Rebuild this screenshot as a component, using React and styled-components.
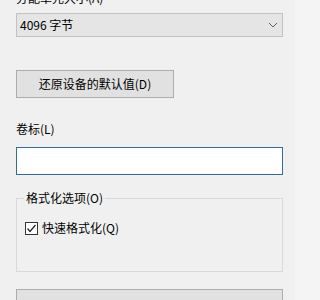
import React from "react";
import styled, { createGlobalStyle } from "styled-components";

const Global = createGlobalStyle`
  html, body { margin: 0; padding: 0; background: #f4f4f4; }
  body { width: 300px; height: 300px; overflow: hidden; }
  * { box-sizing: border-box; }
`;

const Panel = styled.div`
  width: 295px;
  height: 300px;
  background: #f0f0f0;
  padding: 0 12px 0 16px;
  font-family: "Noto Sans CJK SC", "Microsoft YaHei", sans-serif;
  font-size: 12px;
  color: #000;
  display: flex;
  flex-direction: column;
  overflow: hidden;
  & > * { flex-shrink: 0; }
`;

const Label = styled.div`
  height: 16px;
  line-height: 16px;
  margin-top: ${(p) => p.$top || 0}px;
  white-space: nowrap;
`;

const Combo = styled.div`
  margin-top: 7px;
  height: 24px;
  width: 267px;
  background: #e5e5e5;
  border: 1px solid #c2c2c2;
  display: flex;
  align-items: center;
  justify-content: space-between;
  padding: 0 4px 0 3px;
  line-height: 16px;
`;

const Button = styled.div`
  margin-top: ${(p) => p.$top}px;
  width: ${(p) => p.$width}px;
  height: ${(p) => p.$height}px;
  background: #e1e1e1;
  border: 1px solid #adadad;
  display: flex;
  align-items: center;
  justify-content: center;
  line-height: 16px;
`;

const TextBox = styled.div`
  margin-top: 10px;
  width: 267px;
  height: 28px;
  background: #fff;
  border: 1px solid #2f6f9a;
`;

const Group = styled.fieldset`
  margin: 15px 0 0 0;
  width: 267px;
  border: 1px solid #d9d9d9;
  padding: 0 7px 35px 7px;
  min-width: 0;
`;

const Legend = styled.legend`
  padding: 0 2px;
  line-height: 16px;
  height: 16px;
`;

const CheckRow = styled.div`
  margin-top: 14px;
  display: flex;
  align-items: center;
  gap: 4px;
  height: 16px;
  line-height: 16px;
  padding-left: 1px;
`;

const Box = styled.span`
  width: 13px;
  height: 13px;
  border: 1px solid #333;
  background: #fff;
  display: flex;
  align-items: center;
  justify-content: center;
`;

export default function App() {
  return (
    <>
      <Global />
      <Panel>
        <Label $top={-10}>分配单元大小(A)</Label>
        <Combo>
          <span>4096 字节</span>
          <svg width="10" height="6" viewBox="0 0 10 6">
            <polyline points="1,1 5,5 9,1" fill="none" stroke="#606060" strokeWidth="1" />
          </svg>
        </Combo>
        <Button $top={33} $width={158} $height={28}>还原设备的默认值(D)</Button>
        <Label $top={23}>卷标(L)</Label>
        <TextBox />
        <Group>
          <Legend>格式化选项(O)</Legend>
          <CheckRow>
            <Box>
              <svg width="11" height="11" viewBox="0 0 11 11">
                <polyline points="1.5,5.5 4,8.5 9.5,2" fill="none" stroke="#222" strokeWidth="1.2" />
              </svg>
            </Box>
            <span>快速格式化(Q)</span>
          </CheckRow>
        </Group>
        <Button $top={17} $width={267} $height={28} />
      </Panel>
    </>
  );
}
